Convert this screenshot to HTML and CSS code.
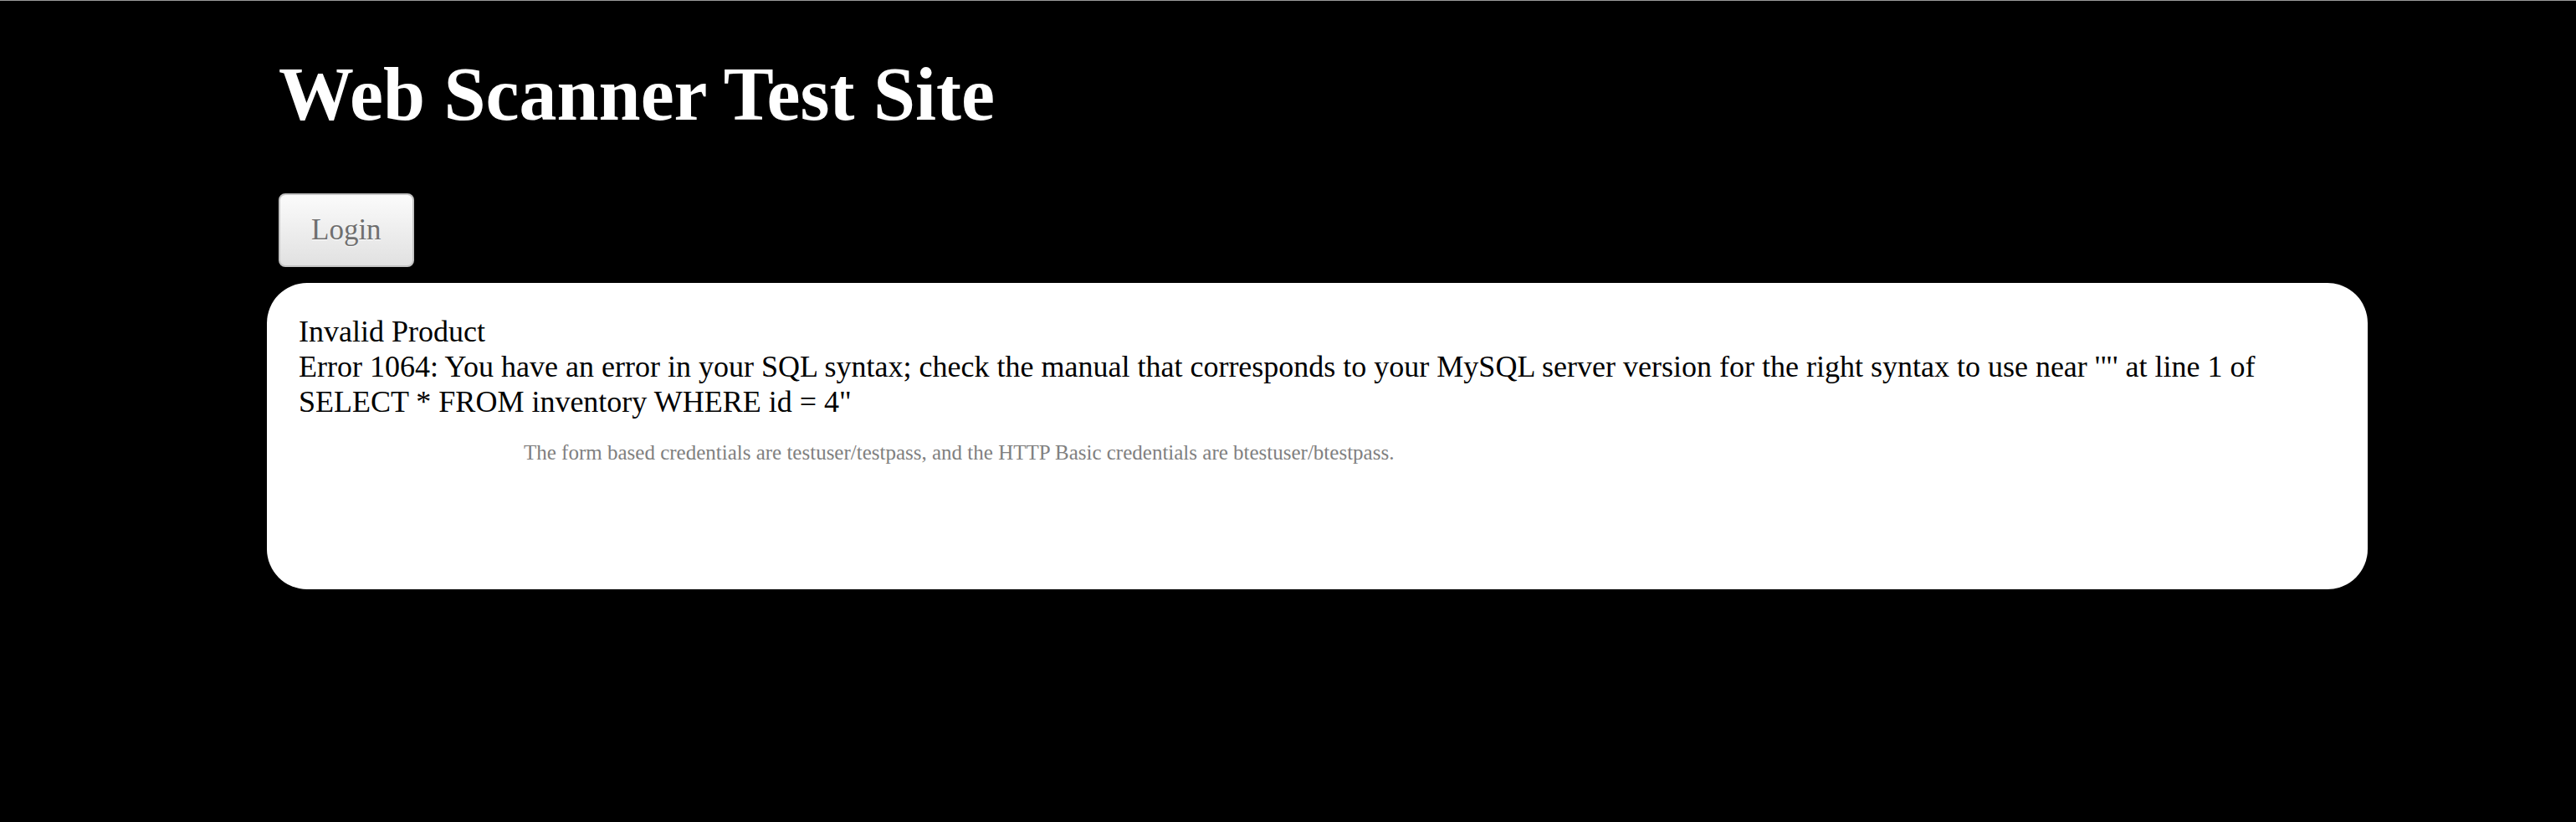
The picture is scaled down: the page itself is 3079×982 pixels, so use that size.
FILE: index.html
```html
<!DOCTYPE html>
<html>
<head>
<meta charset="utf-8">
<title>Web Scanner Test Site</title>
<link rel="stylesheet" href="styles.css">
</head>
<body>
<div class="topline"></div>
<div class="page">
  <header class="header">
    <h1 class="title">Web Scanner Test Site</h1>
    <button class="login-btn" type="button">Login</button>
  </header>
  <main class="card">
    <div class="message">Invalid Product<br>Error 1064: You have an error in your SQL syntax; check the manual that corresponds to your MySQL server version for the right syntax to use near '"' at line 1 of<br>SELECT * FROM inventory WHERE id = 4"</div>
    <p class="note">The form based credentials are testuser/testpass, and the HTTP Basic credentials are btestuser/btestpass.</p>
  </main>
</div>
</body>
</html>
```
FILE: styles.css
```css
html, body {
  margin: 0;
  padding: 0;
  background: #000;
}
body {
  font-family: "Liberation Serif", "Times New Roman", serif;
  min-height: 982px;
}
.topline {
  height: 1px;
  background: #9a9a9a;
}
.page {
  padding-left: 319px;
  width: 2511px;
}
.header {
  padding-left: 14px;
  display: flex;
  flex-direction: column;
  align-items: flex-start;
}
.title {
  margin: 62px 0 0 0;
  font-size: 90px;
  line-height: 100px;
  font-weight: bold;
  color: #fff;
}
.login-btn {
  margin-top: 68px;
  box-sizing: border-box;
  height: 88px;
  padding: 0 37px;
  border: 2px solid #c4c4c4;
  border-radius: 8px;
  background: linear-gradient(#fbfbfb, #e1e1e1);
  font-family: "Liberation Serif", "Times New Roman", serif;
  font-size: 35px;
  color: #6f6f6f;
  text-shadow: 0 1px 0 #fff;
  cursor: pointer;
}
.card {
  display: block;
  margin-top: 19px;
  box-sizing: border-box;
  height: 366px;
  background: #fff;
  border-radius: 48px;
  padding: 37px 38px;
}
.message {
  font-size: 36px;
  color: #000;
}
.note {
  margin: 26px 0 0 0;
  padding-left: 269px;
  font-size: 25px;
  color: #808080;
}
```
